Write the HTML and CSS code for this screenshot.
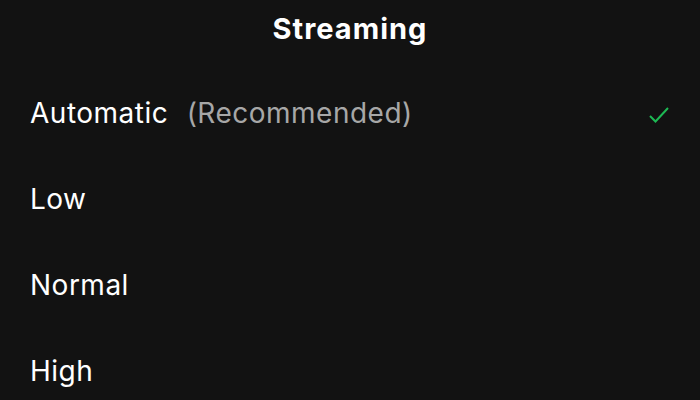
FILE: index.html
```html
<!DOCTYPE html>
<html>
<head>
<meta charset="utf-8">
<link rel="stylesheet" href="styles.css">
</head>
<body>
<div class="screen">
  <header class="title">Streaming</header>
  <ul class="options">
    <li class="option">
      <span class="label">Automatic <span class="hint">(Recommended)</span></span>
      <svg class="check" width="24" height="22" viewBox="0 0 24 22"><polyline points="4,14 9.5,19.5 22,6" fill="none" stroke="#1db954" stroke-width="2"/></svg>
    </li>
    <li class="option"><span class="label">Low</span></li>
    <li class="option"><span class="label">Normal</span></li>
    <li class="option"><span class="label">High</span></li>
  </ul>
</div>
</body>
</html>
```

FILE: styles.css
```css
html, body {
  margin: 0;
  padding: 0;
  background: #121212;
}
.screen {
  width: 700px;
  height: 400px;
  overflow: hidden;
  font-family: "Inter", "Liberation Sans", sans-serif;
  color: #ffffff;
}
.title {
  height: 56px;
  display: flex;
  align-items: center;
  justify-content: center;
  font-size: 29px;
  font-weight: 700;
  letter-spacing: 1px;
}
.options {
  list-style: none;
  margin: 14px 0 0;
  padding: 0;
}
.option {
  height: 86px;
  display: flex;
  align-items: center;
  justify-content: space-between;
  padding: 0 30px 0 30px;
  font-size: 28px;
  letter-spacing: 0.5px;
}
.hint {
  color: #a7a7a7;
  margin-left: 10px;
}
```
